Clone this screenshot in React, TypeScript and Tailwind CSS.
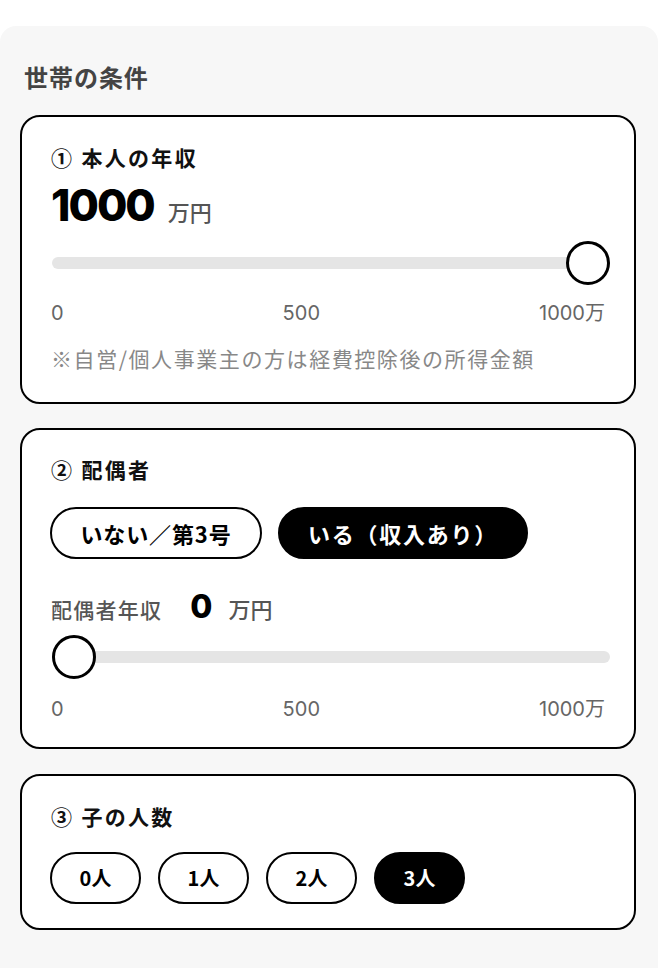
import React from "react";

const jp = { fontFamily: '"Noto Sans CJK JP", sans-serif' };
const lat = { fontFamily: 'Inter, "Noto Sans CJK JP", sans-serif' };

function Slider({ pct }: { pct: number }) {
  return (
    <div className="relative h-[44px] ml-[1px] mr-[-5px] flex items-center">
      <div className="h-[12px] w-full rounded-full bg-[#e5e5e5]" />
      <div
        className="absolute top-0 h-[44px] w-[44px] rounded-full border-[3.5px] border-black bg-white"
        style={{ left: `calc(${pct}% - ${(pct / 100) * 44}px)` }}
      />
    </div>
  );
}

function Scale({ className = "" }: { className?: string }) {
  return (
    <div
      className={`flex justify-between text-[20px] leading-[24px] text-[#666] ${className}`}
      style={lat}
    >
      <span>0</span>
      <span>500</span>
      <span>1000万</span>
    </div>
  );
}

function Title({ children }: { children: React.ReactNode }) {
  return (
    <div
      className="text-[21px] leading-[28px] font-bold text-[#111] tracking-[0.11em]"
      style={jp}
    >
      {children}
    </div>
  );
}

function Pill({
  children,
  active,
  className = "",
}: {
  children: React.ReactNode;
  active?: boolean;
  className?: string;
}) {
  return (
    <div
      className={`h-[52px] flex items-center justify-center rounded-full border-[2.5px] border-black font-bold ${
        active ? "bg-black text-white" : "bg-white text-black"
      } ${className}`}
      style={jp}
    >
      {children}
    </div>
  );
}

export default function App() {
  return (
    <div className="bg-white pt-[26px] min-h-[968px]" style={jp}>
      <div className="bg-[#f7f7f7] rounded-t-[16px] pl-[20px] pr-[22px] pt-[34px] pb-[40px] min-h-[942px]">
        <div className="text-[24px] leading-[34px] font-bold text-[#444] ml-[4px] tracking-[0.04em]">
          世帯の条件
        </div>

        <div className="mt-[21px] flex flex-col">
          {/* Card 1 */}
          <div className="border-2 border-black rounded-[20px] bg-white px-[29px] pt-[26px] pb-[30px]">
            <Title>① 本人の年収</Title>
            <div className="mt-[10px] flex items-baseline h-[48px]">
              <span
                className="text-[44px] leading-[48px] font-extrabold text-black tracking-[-0.045em]"
                style={lat}
              >
                1000
              </span>
              <span className="ml-[14px] text-[22px] font-medium text-[#555]">万円</span>
            </div>
            <div className="mt-[12px]">
              <Slider pct={100} />
            </div>
            <Scale className="mt-[16px]" />
            <div className="mt-[19px] text-[21px] leading-[28px] text-[#888] tracking-[0.075em]">
              ※自営/個人事業主の方は経費控除後の所得金額
            </div>
          </div>

          {/* Card 2 */}
          <div className="mt-[24px] border-2 border-black rounded-[20px] bg-white px-[29px] pt-[25px] pb-[26px]">
            <Title>② 配偶者</Title>
            <div className="mt-[24px] flex gap-[16px] ml-[-1px]">
              <Pill className="w-[212px] text-[22px] tracking-[0.04em]">いない／第3号</Pill>
              <Pill active className="w-[250px] text-[22px] tracking-[0.08em]">
                いる（収入あり）
              </Pill>
            </div>
            <div className="mt-[30px] flex items-baseline h-[36px]">
              <span className="text-[21px] font-medium text-[#555] tracking-[0.06em]">配偶者年収</span>
              <span
                className="ml-[28px] text-[32px] leading-[36px] font-extrabold text-black"
                style={lat}
              >
                0
              </span>
              <span className="ml-[16px] text-[22px] font-medium text-[#555]">万円</span>
            </div>
            <div className="mt-[10px]">
              <Slider pct={0} />
            </div>
            <Scale className="mt-[18px]" />
          </div>

          {/* Card 3 */}
          <div className="mt-[25px] border-2 border-black rounded-[20px] bg-white px-[29px] pt-[26px] pb-[24px]">
            <Title>③ 子の人数</Title>
            <div className="mt-[22px] flex gap-[17px] ml-[-1px]">
              <Pill className="w-[91px] text-[20px]">0人</Pill>
              <Pill className="w-[91px] text-[20px]">1人</Pill>
              <Pill className="w-[91px] text-[20px]">2人</Pill>
              <Pill active className="w-[91px] text-[20px]">
                3人
              </Pill>
            </div>
          </div>
        </div>
      </div>
    </div>
  );
}
